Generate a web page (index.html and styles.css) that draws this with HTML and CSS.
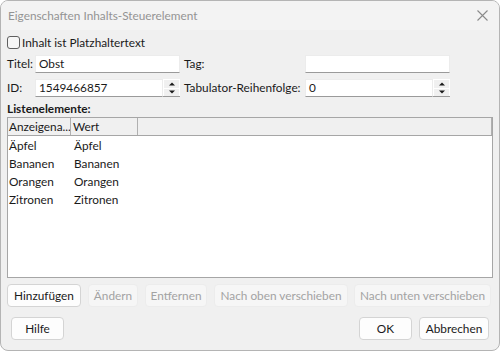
FILE: index.html
```html
<!DOCTYPE html>
<html lang="de">
<head>
<meta charset="utf-8">
<title>Eigenschaften Inhalts-Steuerelement</title>
<link rel="stylesheet" href="styles.css">
</head>
<body>
<div class="window">
  <div class="titlebar">
    <span class="title">Eigenschaften Inhalts-Steuerelement</span>
    <svg class="close" width="11" height="11" viewBox="0 0 11 11"><path d="M0.5 0.5 L10.5 10.5 M10.5 0.5 L0.5 10.5" stroke="#8a8a8a" stroke-width="1.1" fill="none"/></svg>
  </div>
  <div class="content">
    <label class="check-row"><span class="checkbox"></span>Inhalt ist Platzhaltertext</label>
    <div class="fields">
      <span class="lbl">Titel:</span>
      <div class="input">Obst</div>
      <span class="lbl lbl2">Tag:</span>
      <div class="input"></div>
      <span class="lbl">ID:</span>
      <div class="spin"><div class="input">1549466857</div><div class="spin-btns"><span class="up"></span><span class="down"></span></div></div>
      <span class="lbl lbl2">Tabulator-Reihenfolge:</span>
      <div class="spin"><div class="input">0</div><div class="spin-btns"><span class="up"></span><span class="down"></span></div></div>
    </div>
    <div class="list-label">Listenelemente:</div>
    <div class="list">
      <div class="list-head">
        <span class="col1">Anzeigena...</span><span class="col2">Wert</span><span class="col3"></span>
      </div>
      <div class="list-body">
        <div class="list-row"><span class="c1">Äpfel</span><span>Äpfel</span></div>
        <div class="list-row"><span class="c1">Bananen</span><span>Bananen</span></div>
        <div class="list-row"><span class="c1">Orangen</span><span>Orangen</span></div>
        <div class="list-row"><span class="c1">Zitronen</span><span>Zitronen</span></div>
      </div>
    </div>
    <div class="btn-row">
      <button class="btn b-add">Hinzufügen</button>
      <button class="btn dis b-chg">Ändern</button>
      <button class="btn dis b-del">Entfernen</button>
      <button class="btn dis b-up">Nach oben verschieben</button>
      <button class="btn dis b-down">Nach unten verschieben</button>
    </div>
    <div class="foot-row">
      <button class="btn b-help">Hilfe</button>
      <div class="foot-right">
        <button class="btn b-ok">OK</button>
        <button class="btn b-cancel">Abbrechen</button>
      </div>
    </div>
  </div>
</div>
</body>
</html>
```
FILE: styles.css
```css
* { box-sizing: border-box; }
html, body { margin: 0; padding: 0; background: #ffffff; }
body { font-family: "Lato", "Noto Sans", sans-serif; font-size: 11.8px; color: #1a1a1a; white-space: nowrap; }
.window {
  width: 500px; height: 351px;
  border: 1px solid #b4b4b4;
  border-radius: 8px;
  background: #f0f0f0;
  display: flex; flex-direction: column;
  overflow: hidden;
}
.titlebar {
  height: 29px; flex: none;
  display: flex; align-items: center; justify-content: space-between;
  padding: 0 11px 0 7px;
  background: #f3f3f3;
}
.title { color: #939393; }
.close { display: block; }
.content { padding: 0 6px 0 6px; display: flex; flex-direction: column; flex: 1; }
.check-row { display: flex; align-items: center; height: 13px; margin-top: 6px; line-height: 13px; }
.checkbox {
  width: 13px; height: 13px; border: 1px solid #5f5f5f; border-radius: 3px;
  background: #f6f6f6; margin-right: 2px; flex: none;
}
.fields {
  display: grid;
  grid-template-columns: 28px 145px 125px 145px;
  grid-auto-rows: 18px;
  row-gap: 6px;
  margin-top: 6px;
  align-items: center;
}
.lbl { line-height: 18px; }
.lbl2 { padding-left: 4px; }
.input {
  height: 18px; background: #ffffff;
  border: 1px solid #ececec; border-bottom-color: #9a9a9a;
  padding: 0 3px; line-height: 16px;
}
.spin { display: flex; height: 18px; }
.spin .input { flex: 1; }
.spin-btns {
  width: 17px; flex: none; display: flex; flex-direction: column;
  background: #ffffff; border-bottom: 1px solid #9a9a9a;
  padding: 1px 1px 0 1px; gap: 1px;
}
.spin-btns span {
  flex: 1; background: #f0f0f0; position: relative;
}
.spin-btns span::after {
  content: ""; position: absolute; left: 50%; top: 50%;
  width: 0; height: 0; transform: translate(-50%, -50%);
  border-left: 3px solid transparent; border-right: 3px solid transparent;
}
.spin-btns .up::after { border-bottom: 3px solid #1a1a1a; }
.spin-btns .down::after { border-top: 3px solid #1a1a1a; }
.list-label { font-weight: bold; margin-top: 3px; line-height: 17px; height: 17px; }
.list {
  height: 161px;
  border: 1px solid #a6a6a6; border-top: none;
  background: #ffffff;
  display: flex; flex-direction: column;
}
.list-head {
  height: 19px; display: flex; background: #f0f0f0;
  border-top: 1px solid #a6a6a6; border-bottom: 1px solid #a6a6a6;
  line-height: 17px;
}
.list-head span { border-right: 1px solid #b0b0b0; padding-left: 1px; overflow: hidden; }
.list-head .col1 { width: 63px; flex: none; }
.list-head .col2 { width: 67px; flex: none; padding-left: 2px; }
.list-head .col3 { flex: 1; }
.list-body { padding-top: 1px; }
.list-row { display: flex; height: 18px; line-height: 18px; }
.list-row span { padding-left: 1px; }
.list-row .c1 { width: 65px; flex: none; }
.btn {
  font-family: inherit; font-size: 11.8px; color: #1a1a1a; white-space: nowrap;
  height: 23px; border: 1px solid #d4d4d4; border-radius: 4px;
  background: #fdfdfd; padding: 0; margin: 0; line-height: 21px; flex: none;
}
.btn.dis { color: #a3a3a3; background: #f6f6f6; border-color: #ececec; }
.btn-row { display: flex; margin-top: 6px; gap: 7px; }
.b-add { width: 74px; }
.b-chg { width: 50px; }
.b-del { width: 62px; }
.b-up { width: 134px; }
.b-down { width: 137px; margin-left: -1px; }
.foot-row { display: flex; justify-content: space-between; margin-top: 10px; padding: 0 4px 0 4px; }
.foot-right { display: flex; gap: 7px; }
.b-help { width: 53px; }
.b-ok { width: 53px; }
.b-cancel { width: 70px; }
```
